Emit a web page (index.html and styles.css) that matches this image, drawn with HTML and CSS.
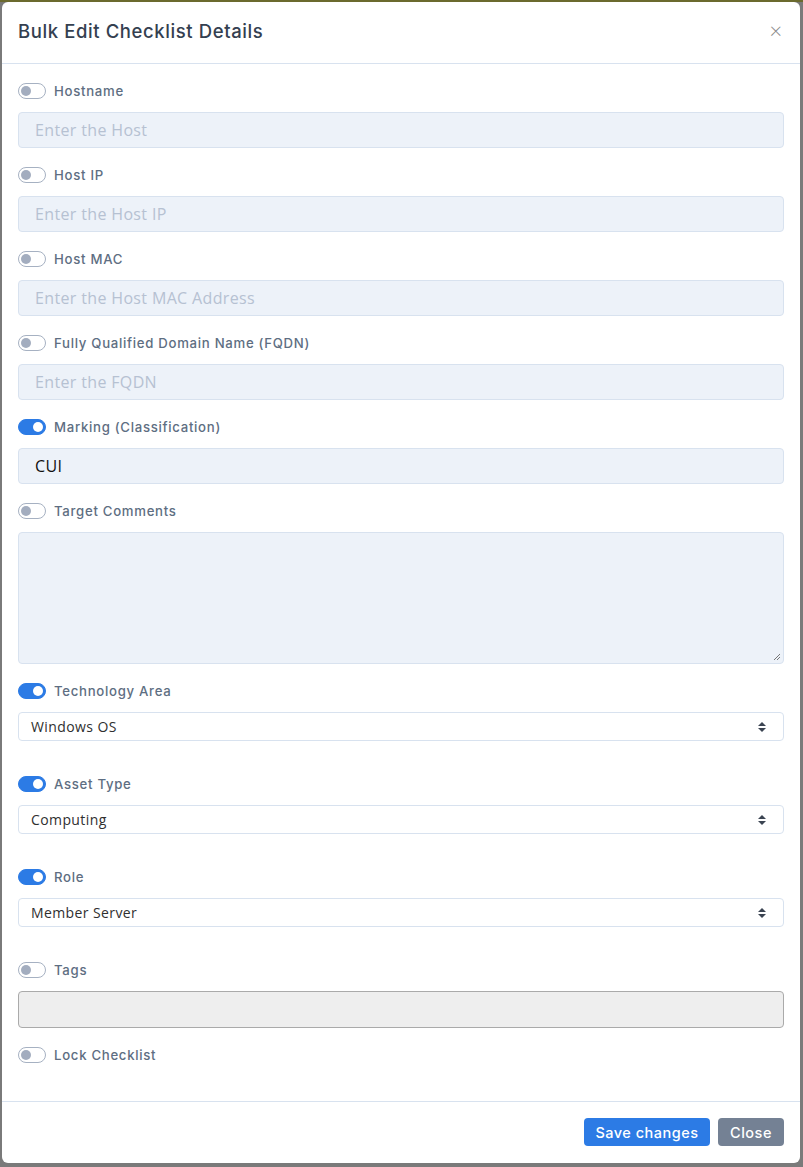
FILE: index.html
```html
<!DOCTYPE html>
<html>
<head>
<meta charset="utf-8">
<link rel="stylesheet" href="styles.css">
</head>
<body>
<div class="modal">
  <div class="modal-header">
    <h5 class="modal-title">Bulk Edit Checklist Details</h5>
    <span class="close-x">&times;</span>
  </div>
  <div class="modal-body">
    <div class="group">
      <div class="switch-row"><span class="switch"></span><span class="label">Hostname</span></div>
      <div class="input placeholder">Enter the Host</div>
    </div>
    <div class="group">
      <div class="switch-row"><span class="switch"></span><span class="label">Host IP</span></div>
      <div class="input placeholder">Enter the Host IP</div>
    </div>
    <div class="group">
      <div class="switch-row"><span class="switch"></span><span class="label">Host MAC</span></div>
      <div class="input placeholder">Enter the Host MAC Address</div>
    </div>
    <div class="group">
      <div class="switch-row"><span class="switch"></span><span class="label">Fully Qualified Domain Name (FQDN)</span></div>
      <div class="input placeholder">Enter the FQDN</div>
    </div>
    <div class="group">
      <div class="switch-row"><span class="switch on"></span><span class="label">Marking (Classification)</span></div>
      <div class="input value">CUI</div>
    </div>
    <div class="group">
      <div class="switch-row"><span class="switch"></span><span class="label">Target Comments</span></div>
      <div class="input textarea"><svg class="grip" width="8" height="8" viewBox="0 0 8 8"><path d="M7 1L1 7M7 4L4 7" stroke="#777" stroke-width="1" fill="none"/></svg></div>
    </div>
    <div class="group select-group">
      <div class="switch-row"><span class="switch on"></span><span class="label">Technology Area</span></div>
      <div class="select"><span>Windows OS</span><svg class="arrows" width="10" height="12" viewBox="0 0 10 12"><path d="M5 1L9 5H1Z M5 11L9 7H1Z" fill="#3b4452"/></svg></div>
    </div>
    <div class="group select-group">
      <div class="switch-row"><span class="switch on"></span><span class="label">Asset Type</span></div>
      <div class="select"><span>Computing</span><svg class="arrows" width="10" height="12" viewBox="0 0 10 12"><path d="M5 1L9 5H1Z M5 11L9 7H1Z" fill="#3b4452"/></svg></div>
    </div>
    <div class="group select-group">
      <div class="switch-row"><span class="switch on"></span><span class="label">Role</span></div>
      <div class="select"><span>Member Server</span><svg class="arrows" width="10" height="12" viewBox="0 0 10 12"><path d="M5 1L9 5H1Z M5 11L9 7H1Z" fill="#3b4452"/></svg></div>
    </div>
    <div class="group">
      <div class="switch-row"><span class="switch"></span><span class="label">Tags</span></div>
      <div class="tags"></div>
    </div>
    <div class="group last">
      <div class="switch-row"><span class="switch"></span><span class="label">Lock Checklist</span></div>
    </div>
  </div>
  <div class="modal-footer">
    <button class="btn btn-primary">Save changes</button>
    <button class="btn btn-secondary">Close</button>
  </div>
</div>
</body>
</html>
```
FILE: styles.css
```css
html, body {
  margin: 0;
  padding: 0;
}
body {
  width: 803px;
  height: 1167px;
  overflow: hidden;
  background: linear-gradient(to bottom, #6b6a2e 0, #6b6a2e 2px, #7a7a7a 2px);
  font-family: "Open Sans", "Liberation Sans", sans-serif;
  padding: 2px 3px 4px 2px;
  box-sizing: border-box;
}
.modal {
  background: #fff;
  border-radius: 6px;
  height: 1161px;
  display: flex;
  flex-direction: column;
  box-sizing: border-box;
}
.modal-header {
  height: 62px;
  border-bottom: 1px solid #d8e2ef;
  display: flex;
  align-items: center;
  justify-content: space-between;
  padding: 0 16px 4px 16px;
  box-sizing: border-box;
}
.modal-title {
  margin: 0;
  font-family: Inter, "Open Sans", sans-serif;
  font-size: 18.5px;
  font-weight: 500;
  color: #344050;
  letter-spacing: 0.6px;
}
.close-x {
  font-size: 22px;
  color: #8a8a8a;
  line-height: 1;
  margin-right: 2px;
  margin-top: -2px;
  font-weight: 300;
}
.modal-body {
  flex: 1;
  padding: 16px 16px 0 16px;
}
.group {
  margin-bottom: 16px;
}
.select-group {
  margin-bottom: 32px;
}
.switch-row {
  height: 22px;
  display: flex;
  align-items: center;
  margin-bottom: 10px;
}
.group.last .switch-row { margin-bottom: 0; }
.switch {
  width: 28px;
  height: 16px;
  border: 1px solid #a6b1c2;
  border-radius: 9px;
  box-sizing: border-box;
  position: relative;
  flex-shrink: 0;
  background: #fff;
}
.switch::after {
  content: "";
  position: absolute;
  left: 2px;
  top: 2px;
  width: 10px;
  height: 10px;
  border-radius: 50%;
  background: #a3adbf;
}
.switch.on {
  background: #2c7be5;
  border-color: #2c7be5;
}
.switch.on::after {
  left: auto;
  right: 2px;
  background: #fff;
}
.label {
  margin-left: 8px;
  font-family: Inter, "Open Sans", sans-serif;
  font-size: 13.2px;
  font-weight: 500;
  color: #5e6e82;
  letter-spacing: 0.7px;
}
.input {
  height: 36px;
  background: #edf2f9;
  border: 1px solid #d8e2ef;
  border-radius: 4px;
  box-sizing: border-box;
  padding: 0 16px 1px 16px;
  display: flex;
  align-items: center;
  font-size: 16px;
  letter-spacing: 0.35px;
}
.placeholder {
  color: #b6c1d2;
}
.value {
  color: #111;
}
.textarea {
  height: 132px;
  position: relative;
}
.grip {
  position: absolute;
  right: 2px;
  bottom: 2px;
}
.select {
  height: 29px;
  background: #fff;
  border: 1px solid #d8e2ef;
  border-radius: 4px;
  box-sizing: border-box;
  padding: 0 12px 0 12px;
  display: flex;
  align-items: center;
  justify-content: space-between;
  font-size: 14px;
  color: #2f2f2f;
  letter-spacing: 0.4px;
}
.arrows {
  margin-right: 4px;
}
.tags {
  height: 37px;
  background: #eeeeee;
  border: 1px solid #aaaaaa;
  border-radius: 4px;
  box-sizing: border-box;
}
.modal-footer {
  height: 62px;
  border-top: 1px solid #d8e2ef;
  display: flex;
  justify-content: flex-end;
  align-items: flex-start;
  padding: 16px 16px 0 0;
  gap: 8px;
  box-sizing: border-box;
}
.btn {
  height: 28px;
  border: none;
  border-radius: 4px;
  color: #fff;
  font-family: Inter, "Open Sans", sans-serif;
  font-size: 14.5px;
  font-weight: 500;
  letter-spacing: 0.5px;
  padding: 0;
  cursor: pointer;
}
.btn-primary {
  background: #2c7be5;
  width: 126px;
}
.btn-secondary {
  background: #748194;
  width: 66px;
}
```
